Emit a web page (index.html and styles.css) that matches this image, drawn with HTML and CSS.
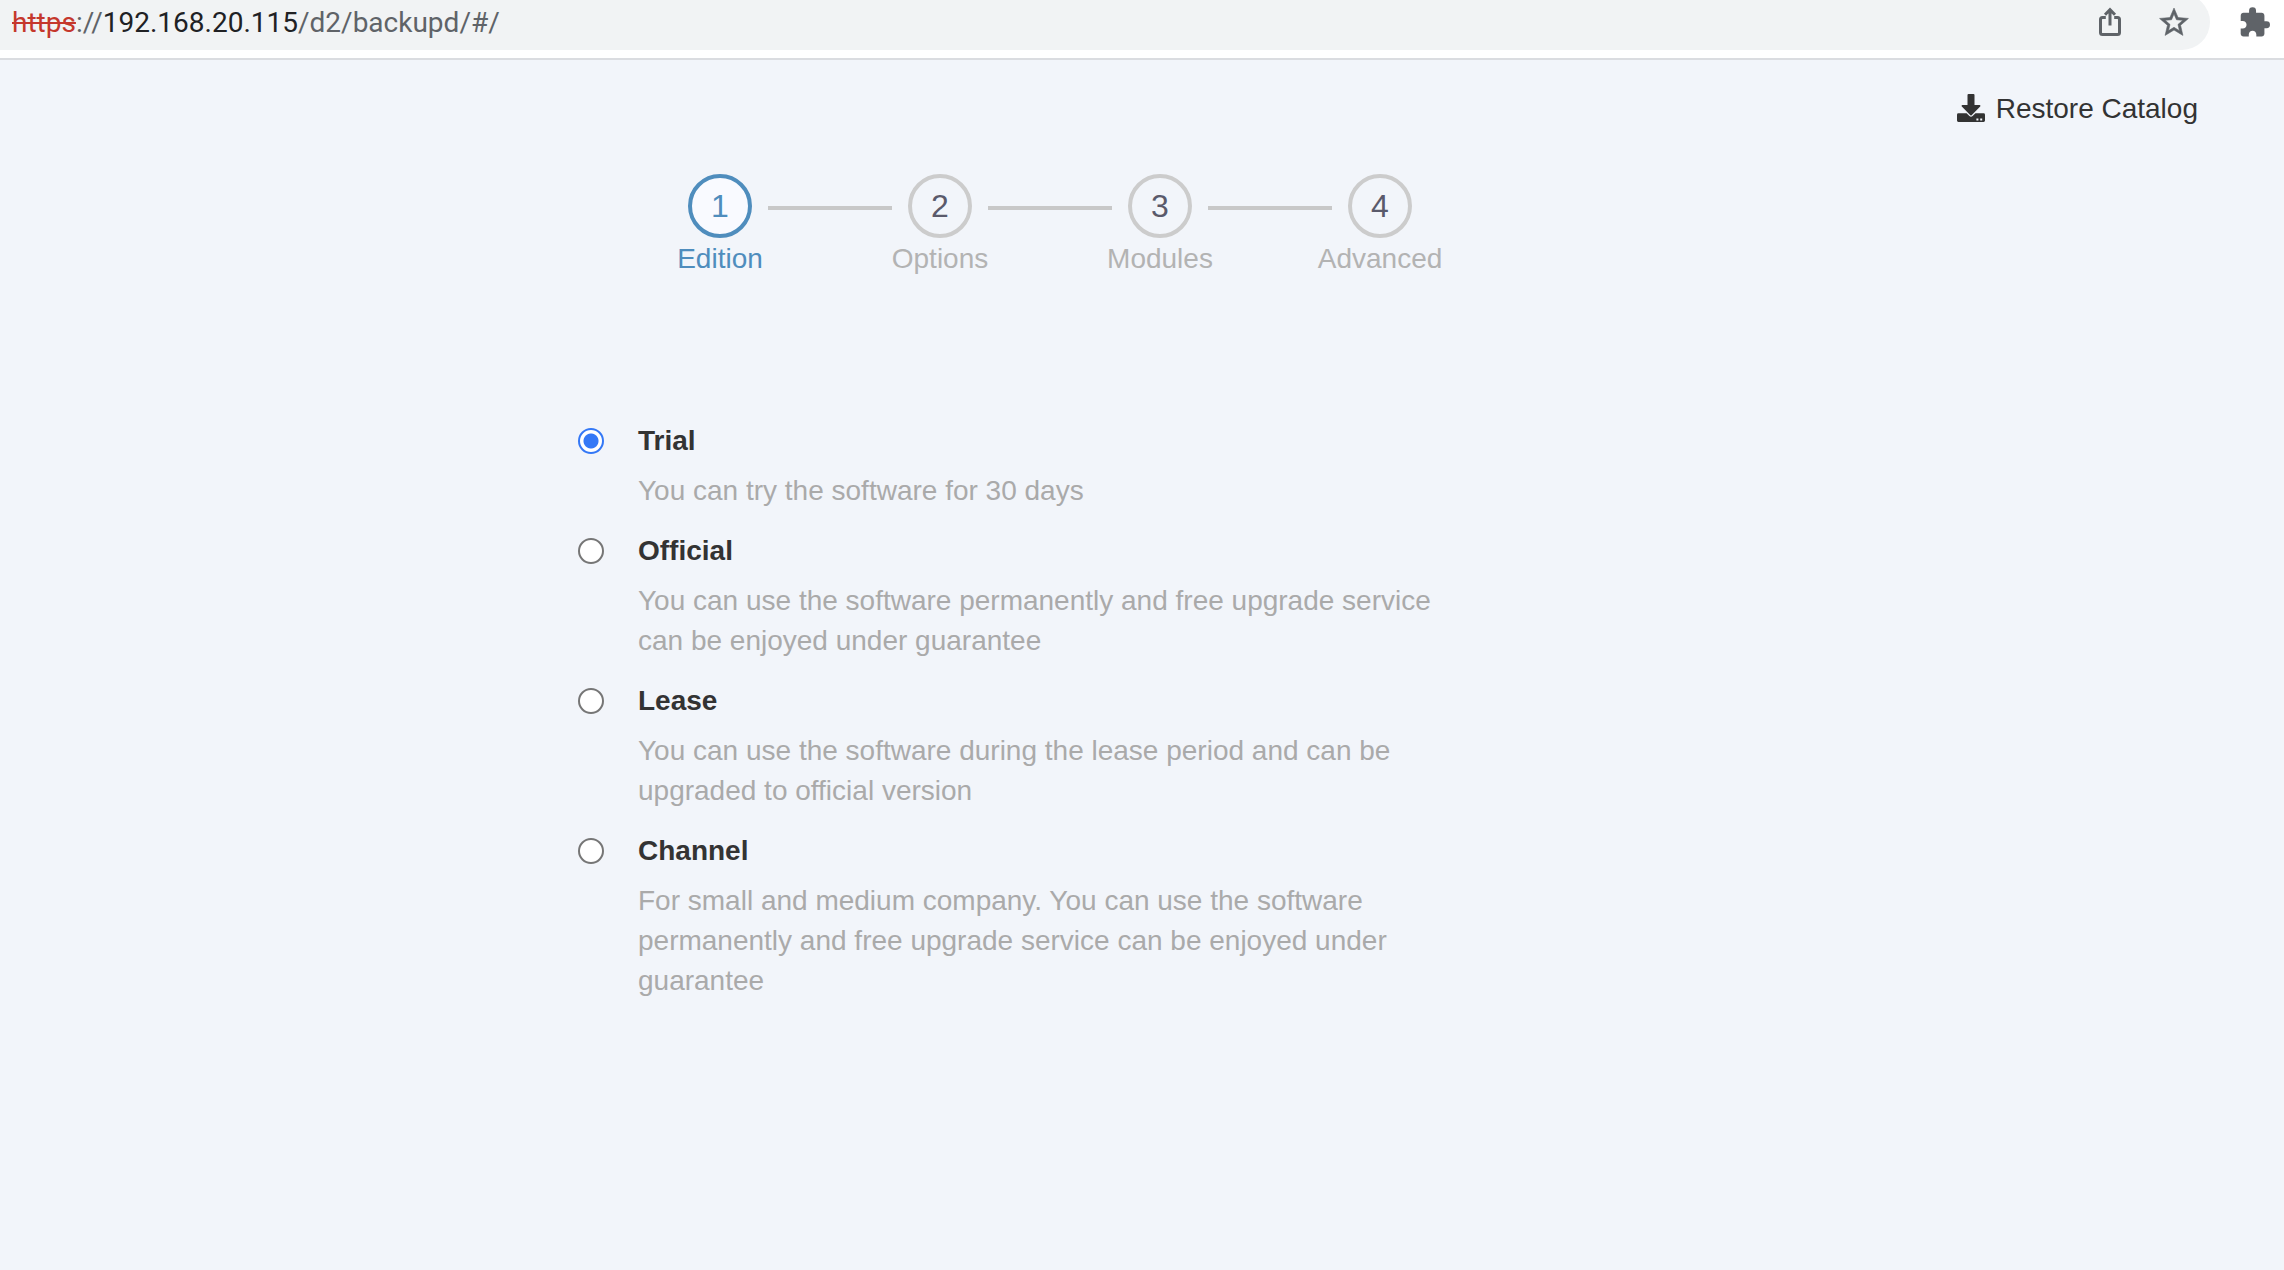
FILE: index.html
```html
<!DOCTYPE html>
<html lang="en">
<head>
<meta charset="utf-8">
<meta name="viewport" content="width=device-width, initial-scale=1">
<title>Restore Catalog</title>
<link rel="stylesheet" href="styles.css">
</head>
<body>
<header class="toolbar">
  <div class="omnibox">
    <div class="url"><span class="url-scheme">https</span>://<span class="url-host">192.168.20.115</span>/d2/backupd/#/</div>
    <button class="icon-button" type="button" aria-label="Share">
      <svg width="30" height="30" viewBox="0 0 30 30" fill="none" stroke="#5f6368" stroke-width="3">
        <path d="M10.800 10.500H7.500a2 2 0 0 0-2 2v13a2 2 0 0 0 2 2h15a2 2 0 0 0 2-2v-13a2 2 0 0 0-2-2h-3.300M15 18.500V3M10 7.700l5-5 5 5"/>
      </svg>
    </button>
    <button class="icon-button" type="button" aria-label="Bookmark">
      <svg width="30" height="30" viewBox="1.600 1.300 20.800 20.800" fill="#5f6368" stroke="#5f6368" stroke-width=".4">
        <path d="M22 9.240l-7.190-.62L12 2 9.190 8.630 2 9.240l5.460 4.730L5.820 21 12 17.270 18.180 21l-1.630-7.030L22 9.240zM12 15.400l-3.760 2.270 1-4.280-3.320-2.880 4.380-.38L12 6.100l1.710 4.040 4.380.38-3.320 2.880 1 4.280L12 15.400z"/>
      </svg>
    </button>
  </div>
  <button class="icon-button" type="button" aria-label="Extensions">
    <svg width="30" height="30" viewBox="1.500 .8 21.500 21.500" fill="#5f6368">
      <path d="M20.500 11H19V7c0-1.100-.9-2-2-2h-4V3.500a2.500 2.500 0 0 0-5 0V5H4c-1.100 0-1.990.9-1.990 2v3.800H3.500c1.490 0 2.700 1.210 2.700 2.700s-1.210 2.700-2.700 2.700H2V20c0 1.100.9 2 2 2h3.800v-1.500c0-1.490 1.210-2.700 2.700-2.700s2.700 1.210 2.700 2.700V22H17c1.100 0 2-.9 2-2v-4h1.500a2.500 2.500 0 0 0 0-5z"/>
    </svg>
  </button>
</header>

<main class="page">
  <div class="actions">
    <button class="restore" type="button">
      <svg width="28" height="28" viewBox="0 0 28 28" aria-hidden="true">
        <path fill="#333" fill-rule="evenodd" d="M11.500 0h5a1 1 0 0 1 1 1v10h5.100a.9.900 0 0 1 .6 1.500L14.600 21.200a.9.900 0 0 1-1.200 0L4.800 12.500a.9.900 0 0 1 .6-1.500h5.100V1a1 1 0 0 1 1-1zM1.400 19.300H9.600l2.800 2.800a2.300 2.300 0 0 0 3.200 0l2.800-2.800h8.200A1.400 1.400 0 0 1 28 20.700v5.900a1.400 1.400 0 0 1-1.400 1.400H1.400A1.400 1.400 0 0 1 0 26.600v-5.900a1.400 1.400 0 0 1 1.400-1.400zM19.400 24.400v2h2v-2zM23.200 24.400v2h2v-2z"/>
      </svg>
      Restore Catalog
    </button>
  </div>

  <div class="wizard">
    <ol class="steps">
      <li class="step step-active"><div class="step-body"><span class="step-number">1</span><span class="step-label">Edition</span></div></li>
      <li class="step"><div class="step-body"><span class="step-number">2</span><span class="step-label">Options</span></div></li>
      <li class="step"><div class="step-body"><span class="step-number">3</span><span class="step-label">Modules</span></div></li>
      <li class="step"><div class="step-body"><span class="step-number">4</span><span class="step-label">Advanced</span></div></li>
    </ol>

    <form class="editions">
      <div class="edition">
        <input class="radio" type="radio" name="edition" id="trial" checked>
        <div class="edition-text">
          <label class="edition-name" for="trial">Trial</label>
          <p class="edition-note">You can try the software for 30 days</p>
        </div>
      </div>
      <div class="edition">
        <input class="radio" type="radio" name="edition" id="official">
        <div class="edition-text">
          <label class="edition-name" for="official">Official</label>
          <p class="edition-note">You can use the software permanently and free upgrade service can be enjoyed under guarantee</p>
        </div>
      </div>
      <div class="edition">
        <input class="radio" type="radio" name="edition" id="lease">
        <div class="edition-text">
          <label class="edition-name" for="lease">Lease</label>
          <p class="edition-note">You can use the software during the lease period and can be upgraded to official version</p>
        </div>
      </div>
      <div class="edition">
        <input class="radio" type="radio" name="edition" id="channel">
        <div class="edition-text">
          <label class="edition-name" for="channel">Channel</label>
          <p class="edition-note">For small and medium company. You can use the software permanently and free upgrade service can be enjoyed under guarantee</p>
        </div>
      </div>
    </form>
  </div>
</main>
</body>
</html>
```
FILE: styles.css
```css
* {
  box-sizing: border-box;
}

body {
  margin: 0;
  min-height: 100vh;
  background: #f2f5fa;
  color: #333;
  font: 28px/40px "Helvetica Neue", "Liberation Sans", Arial, sans-serif;
}

button {
  border: 0;
  padding: 0;
  background: none;
  color: inherit;
  font: inherit;
  cursor: pointer;
}

svg {
  display: block;
}

/* Browser toolbar */
.toolbar {
  display: flex;
  align-items: flex-end;
  gap: 30px;
  height: 60px;
  padding: 0 14px 8px 0;
  overflow: hidden;
  background: #fff;
  border-bottom: 2px solid #dadce0;
}

.omnibox {
  flex: 1;
  display: flex;
  align-items: center;
  gap: 34px;
  height: 56px;
  padding: 0 21px 0 12px;
  background: #f1f3f4;
  border-radius: 0 28px 28px 0;
}

.url {
  flex: 1;
  padding-top: 2px;
  color: #5f6368;
  font-family: Roboto, sans-serif;
}

.url-scheme {
  color: #c5372c;
  text-decoration: line-through;
}

.url-host {
  color: #202124;
}

.toolbar > .icon-button {
  padding-bottom: 13px;
}

/* Page */
.page {
  padding: 29px 0;
}

.actions {
  display: flex;
  justify-content: flex-end;
  padding-right: 86px;
}

.restore {
  display: flex;
  align-items: center;
  gap: 11px;
}

.restore svg {
  margin-bottom: 2px;
}

.wizard {
  max-width: 880px;
  margin: 45px 0 0 25%;
  padding-left: 7px;
  box-sizing: content-box;
}

/* Step indicator */
.steps {
  display: flex;
  gap: 16px;
  margin: 0;
  padding: 0 0 0 110px;
  list-style: none;
}

.step {
  display: flex;
  gap: 16px;
  color: #b3b3b3;
}

.step:not(:last-child)::after {
  content: "";
  width: 124px;
  height: 4px;
  margin-top: 32px;
  background: #c8c8c8;
}

.step-body {
  display: flex;
  flex-direction: column;
  align-items: center;
  gap: 1px;
  width: 64px;
  white-space: nowrap;
}

.step-number {
  display: flex;
  align-items: center;
  justify-content: center;
  width: 64px;
  height: 64px;
  border: 4px solid #ccc;
  border-radius: 50%;
  color: #5a5a6b;
  font-size: 32px;
}

.step-active,
.step-active .step-number {
  color: #4f8dbd;
}

.step-active .step-number {
  border-color: #4f8dbd;
  background: #f9faff;
}

/* Edition choices */
.editions {
  display: grid;
  gap: 20px;
  margin-top: 142px;
}

.edition {
  display: flex;
  gap: 34px;
}

.radio {
  appearance: none;
  flex: none;
  width: 26px;
  height: 26px;
  margin: 7px 0 0;
  border: 2px solid #767676;
  border-radius: 50%;
  background: #fff;
}

.radio:checked {
  border-color: #3478f6;
  background: radial-gradient(circle, #3478f6 7px, #fff 8px);
}

.edition-text {
  flex: 1;
}

.edition-name {
  display: block;
  font-weight: bold;
}

.edition-note {
  margin: 10px 0 0;
  color: #aaa;
}
```
